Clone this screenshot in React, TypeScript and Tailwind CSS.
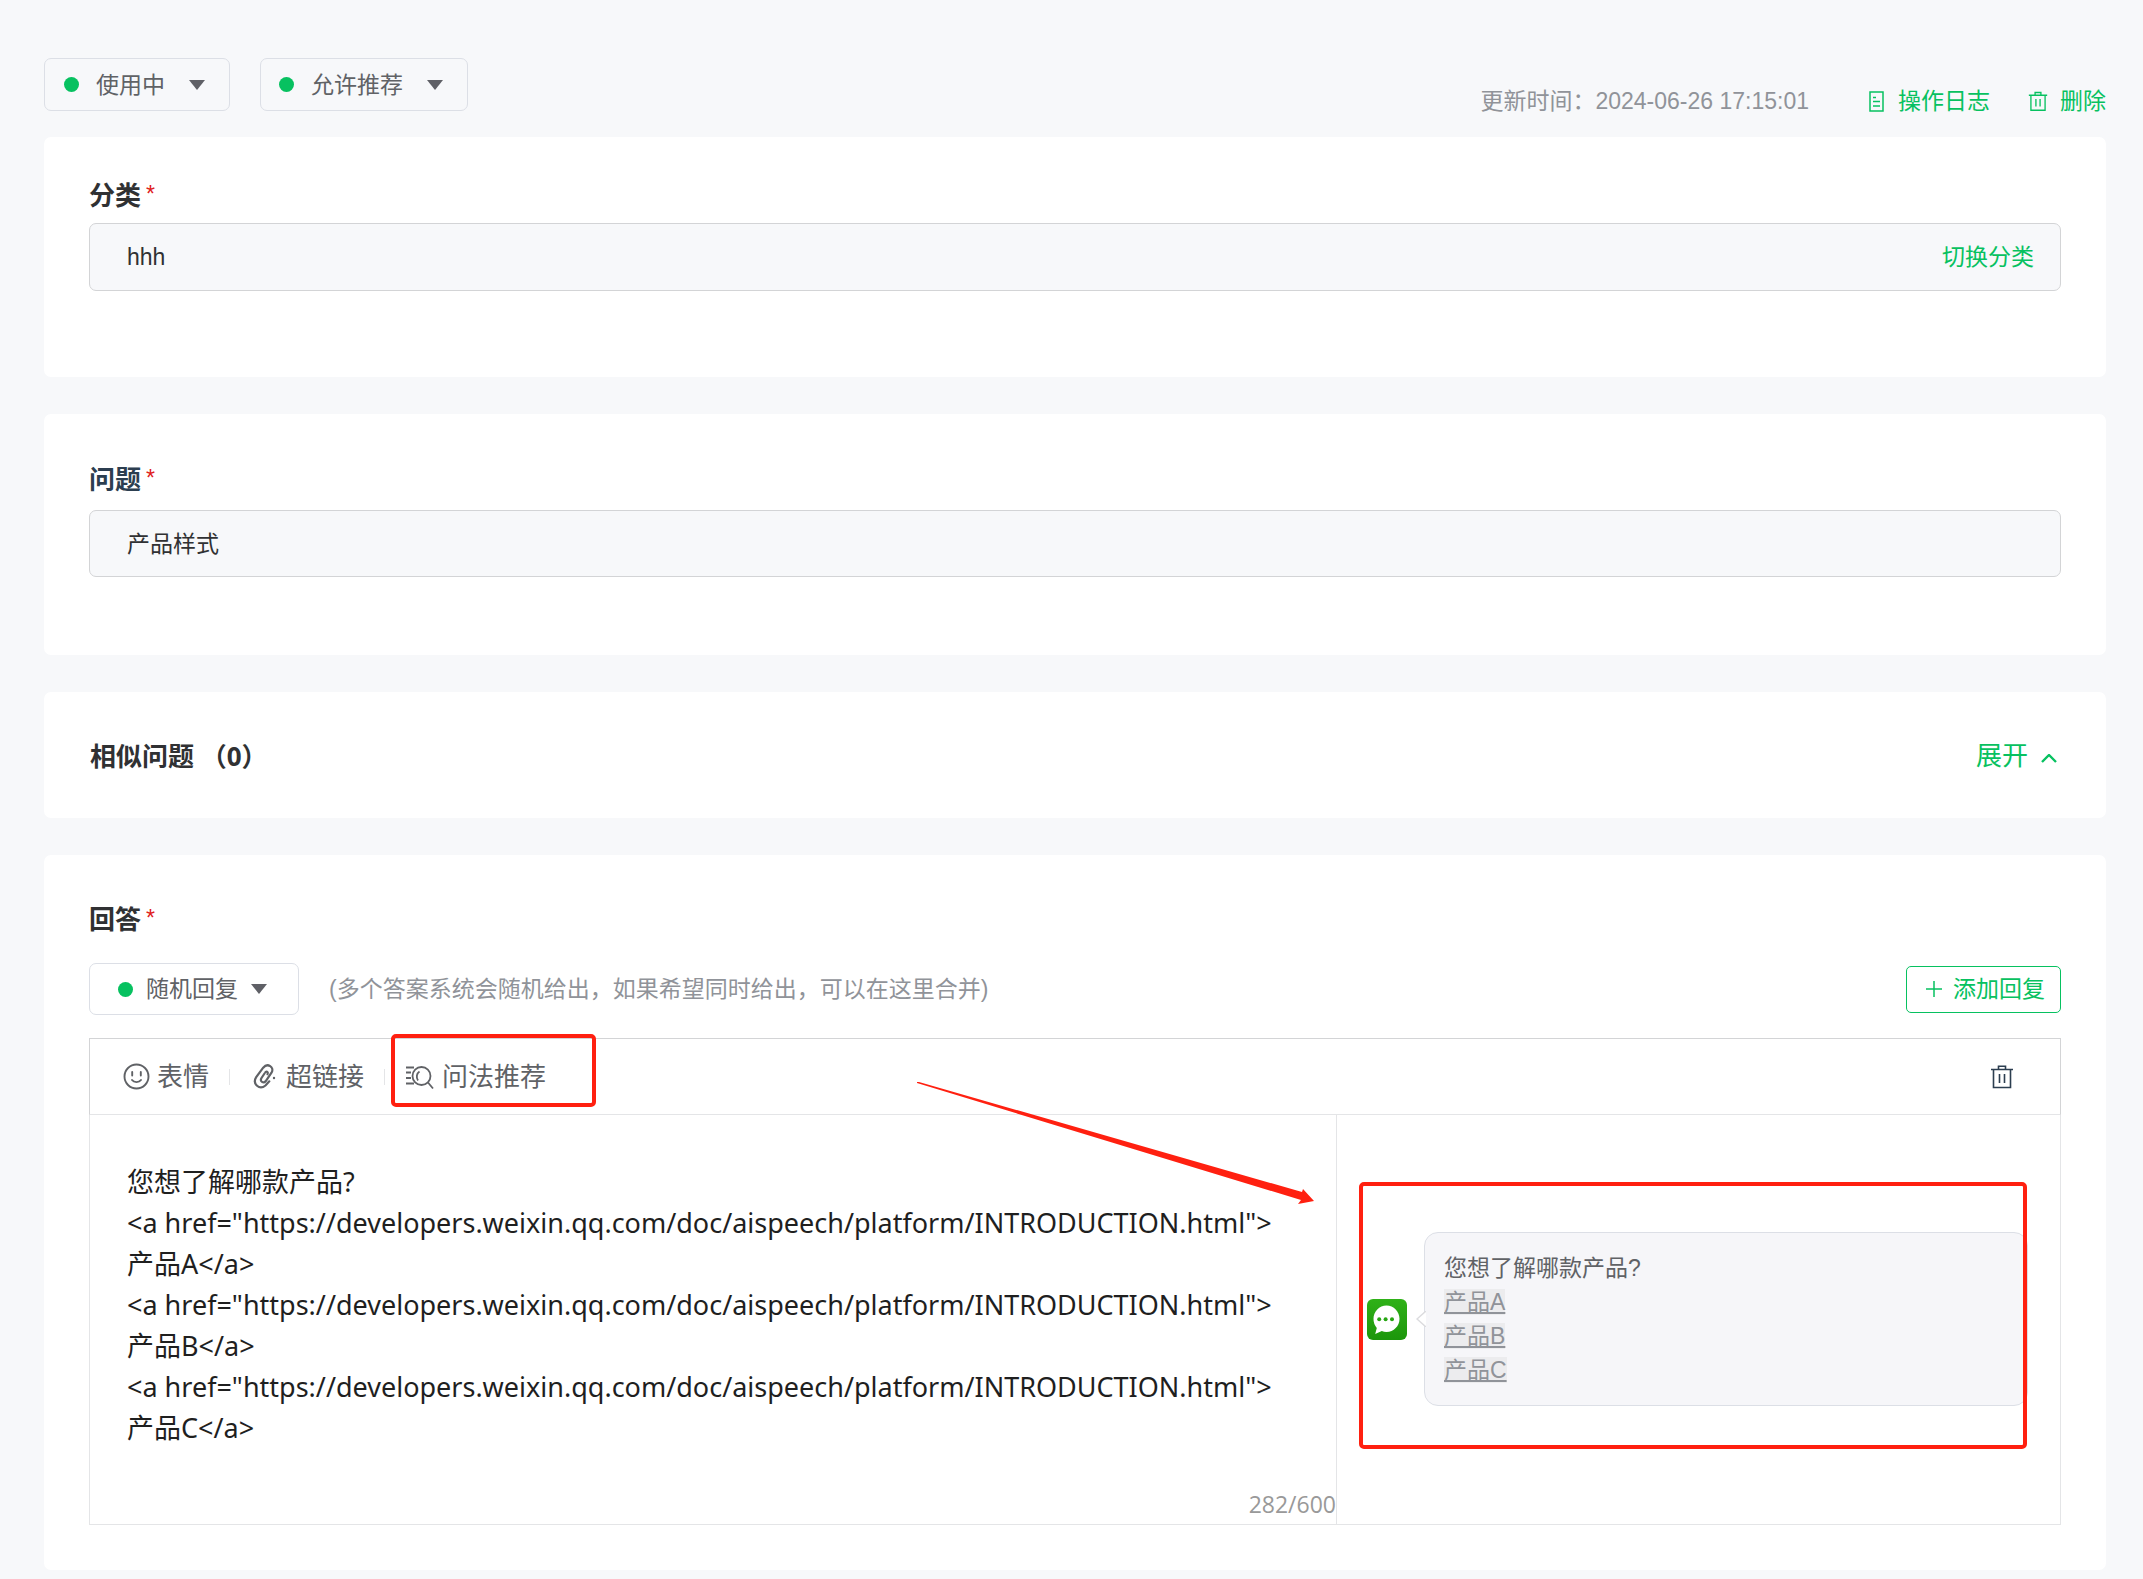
import React, { useState } from 'react';

const answerText = `您想了解哪款产品?
<a href="https://developers.weixin.qq.com/doc/aispeech/platform/INTRODUCTION.html">产品A</a>
<a href="https://developers.weixin.qq.com/doc/aispeech/platform/INTRODUCTION.html">产品B</a>
<a href="https://developers.weixin.qq.com/doc/aispeech/platform/INTRODUCTION.html">产品C</a>`;

const products = ['产品A', '产品B', '产品C'];

const Dot = () => <span className="h-[15px] w-[15px] shrink-0 rounded-full bg-[#07c160]" />;

const Caret = () => (
  <svg className="h-[10px] w-4 shrink-0" viewBox="0 0 16 10" fill="#5f6066">
    <path d="M0 0h16L8 10z" />
  </svg>
);

const TrashIcon = ({ className }: { className: string }) => (
  <svg className={className} viewBox="0 0 24 24" fill="none" stroke="currentColor" strokeWidth="1.6">
    <path d="M1 4.5h22M8.5 4.5V1.2h7v3.3M3.5 4.5v18h17v-18M9.5 9v9M14.5 9v9" />
  </svg>
);

const LogIcon = () => (
  <svg className="h-[21px] w-[19px]" viewBox="0 0 19 21" fill="none" stroke="currentColor" strokeWidth="1.5">
    <path d="M3 1h13v19H3zM6 6.5h3M6 10.5h7M6 15h7" />
  </svg>
);

const SmileIcon = () => (
  <svg className="h-[27px] w-[27px]" viewBox="0 0 27 27" fill="none" stroke="currentColor" strokeWidth="1.9" strokeLinecap="round">
    <circle cx="13.5" cy="13.5" r="12" />
    <path d="M9.2 9v3.5M17.8 9v3.5M9 17c2 2.8 7 2.8 9 0" />
  </svg>
);

const ClipIcon = () => (
  <svg className="h-[26px] w-[24px]" viewBox="0 0 24 26" fill="none" stroke="currentColor" strokeWidth="2.2" strokeLinecap="round">
    <path d="M11.5 9.5l-3 4.5c-2 3.5 2 6 4.3 3l5.7-8.3c3.3-5.7-4-10.200-8.300-5L3.200 13.200c-4.200 6.800 3.300 13.300 9.300 8.300l3.800-4.200" />
    <path d="M12.5 8.2c1.5-1.200 3 .2 2 2" />
    <circle cx="21" cy="14" r="1.2" fill="currentColor" stroke="none" />
  </svg>
);

const QuerySearchIcon = () => (
  <svg className="h-[26px] w-[29px]" viewBox="0 0 29 26" fill="none" stroke="currentColor" strokeWidth="1.8">
    <circle cx="16.5" cy="12" r="9" />
    <path d="M23 18.500l5 6M13 16.500c-2-3-1.500-7 1.500-9M1 3.500h8M1 8.500h5M1 14h5M1 19.500h8" />
  </svg>
);

const RobotAvatar = () => (
  <svg className="h-[41px] w-10 shrink-0" viewBox="0 0 40 41">
    <defs>
      <linearGradient id="avatar" x1="0" y1="0" x2="0" y2="1">
        <stop offset="0" stopColor="#2fb118" />
        <stop offset="1" stopColor="#1c960b" />
      </linearGradient>
    </defs>
    <rect width="40" height="41" rx="6" fill="url(#avatar)" />
    <path d="M19.5 6.500c7.200 0 13 6 13 13.300s-5.800 13.200-13 13.200c-1.700 0-3.300-.3-4.700-.9L8.200 35l1.600-6.100a13.400 13.400 0 0 1-3.300-9.100c0-7.300 5.800-13.300 13-13.300z" fill="#fff" />
    <g fill="#27a613">
      <circle cx="12.2" cy="20.3" r="2" />
      <circle cx="18.6" cy="20.3" r="2" />
      <circle cx="25" cy="20.3" r="2" />
    </g>
  </svg>
);

interface FieldLabelProps {
  htmlFor: string;
  color: string;
  children: React.ReactNode;
}

const FieldLabel = ({ htmlFor, color, children }: FieldLabelProps) => (
  <label htmlFor={htmlFor} className={`flex text-[26px] leading-9 font-bold ${color}`}>
    {children}
    <span className="ml-[5px] text-[23px] leading-8 font-normal text-[#e02020]">*</span>
  </label>
);

const Divider = () => <span className="h-4 w-px bg-[#e4e5e7]" />;

export default function App() {
  const [question, setQuestion] = useState('产品样式');
  const [answer, setAnswer] = useState(answerText);

  return (
    <div className="min-h-screen bg-[#f7f8fa] pt-[58px] pr-[37px] pb-[9px] pl-11 font-['Liberation_Sans','Noto_Sans_CJK_SC',sans-serif] text-[23px] leading-[34px] text-[#606266]">
      <header className="flex h-[79px] items-start justify-between">
        <div className="flex gap-[30px]">
          <button className="flex h-[53px] items-center rounded-[7px] border border-[#dcdfe6] pr-6 pl-[19px]">
            <Dot />
            <span className="mr-6 ml-[17px]">使用中</span>
            <Caret />
          </button>
          <button className="flex h-[53px] items-center rounded-[7px] border border-[#dcdfe6] pr-6 pl-[18px]">
            <Dot />
            <span className="mr-6 ml-[17px]">允许推荐</span>
            <Caret />
          </button>
        </div>
        <div className="flex items-center pt-[26px]">
          <span className="mr-[58px] text-[#909399]">更新时间：2024-06-26 17:15:01</span>
          <button className="mr-[38px] flex items-center gap-3 text-[#07c160]">
            <LogIcon />
            操作日志
          </button>
          <button className="flex items-center gap-3 text-[#07c160]">
            <TrashIcon className="h-[21px] w-5" />
            删除
          </button>
        </div>
      </header>

      <main className="flex flex-col gap-[37px]">
        <section className="rounded-[7px] bg-white px-[45px] pt-[41px] pb-[86px]">
          <FieldLabel htmlFor="category" color="text-[#303133]">分类</FieldLabel>
          <div className="mt-[9px] flex h-[68px] items-center rounded-[7px] border border-[#d3d4d6] bg-[#f7f8fa] pr-[26px] pl-[37px]">
            <input id="category" readOnly value="hhh" className="min-w-0 flex-1 bg-transparent text-[#303133] outline-none" />
            <button className="text-[#07c160]">切换分类</button>
          </div>
        </section>

        <section className="rounded-[7px] bg-white px-[45px] pt-12 pb-[78px]">
          <FieldLabel htmlFor="question" color="text-[#2c3e50]">问题</FieldLabel>
          <input
            id="question"
            value={question}
            onChange={e => setQuestion(e.target.value)}
            className="mt-3 block h-[67px] w-full rounded-[7px] border border-[#d3d4d6] bg-[#f7f8fa] px-[37px] pb-[3px] text-[#303133] outline-none"
          />
        </section>

        <section className="flex h-[126px] items-center justify-between rounded-[7px] bg-white pt-0.5 pr-[49px] pl-[46px] text-[26px]">
          <h2 className="font-['Open_Sans','Noto_Sans_CJK_SC',sans-serif] font-bold text-[#303133]">相似问题 （0）</h2>
          <button className="flex items-center gap-[13px] text-[#07c160]">
            展开
            <svg className="mt-1 h-[9px] w-4" viewBox="0 0 16 9" fill="none" stroke="currentColor" strokeWidth="2.4">
              <path d="M1 8l7-7 7 7" />
            </svg>
          </button>
        </section>

        <section className="rounded-[7px] bg-white px-[45px] pt-[47px] pb-[45px]">
          <FieldLabel htmlFor="answer" color="text-[#303133]">回答</FieldLabel>
          <div className="mt-[25px] flex items-center">
            <button className="flex h-[52px] items-center rounded-[7px] border border-[#dcdfe6] pr-[31px] pl-7">
              <Dot />
              <span className="mr-[13px] ml-[13px]">随机回复</span>
              <Caret />
            </button>
            <span className="ml-[30px] text-[#909399]">(多个答案系统会随机给出，如果希望同时给出，可以在这里合并)</span>
            <button className="ml-auto flex h-[47px] items-center gap-[11px] rounded-[5px] border border-[#07c160] pr-[15px] pl-[19px] text-[#07c160]">
              <svg className="h-4 w-4" viewBox="0 0 16 16" stroke="currentColor" strokeWidth="1.5">
                <path d="M8 0v16M0 8h16" />
              </svg>
              添加回复
            </button>
          </div>

          <div className="relative mt-[23px]">
            <div className="flex h-[77px] items-center justify-between border border-[#d3d4d6] border-b-[#e4e5e7] pr-[46px] pl-[33px] text-[26px]">
              <div className="flex items-center">
                <button className="mr-5 flex items-center gap-[7px]">
                  <SmileIcon />
                  表情
                </button>
                <Divider />
                <button className="mr-5 ml-[23px] flex items-center gap-[9px]">
                  <ClipIcon />
                  超链接
                </button>
                <Divider />
                <div className="relative ml-5">
                  <button className="flex items-center gap-2">
                    <QuerySearchIcon />
                    问法推荐
                  </button>
                  <span className="pointer-events-none absolute -top-[26px] -right-[50px] -bottom-[13px] -left-[14px] rounded-[5px] border-4 border-[#ff2010]" />
                </div>
              </div>
              <button aria-label="删除回复" className="text-[#2c3e50]">
                <TrashIcon className="h-6 w-6" />
              </button>
            </div>

            <div className="flex h-[410px] border border-t-0 border-[#e4e5e7]">
              <div className="flex w-[63.3%] flex-col border-r border-[#e4e5e7]">
                <textarea
                  id="answer"
                  value={answer}
                  onChange={e => setAnswer(e.target.value)}
                  className="min-h-0 w-full flex-1 resize-none overflow-hidden pt-[46px] pr-10 pl-[37px] font-['Noto_Sans','Noto_Sans_CJK_SC',sans-serif] text-[27px] leading-[41px] text-[#1f1f1f] outline-none"
                />
                <span className="pb-[3px] text-right font-['Open_Sans',sans-serif] text-[23px] text-[#999]">282/600</span>
              </div>
              <div className="flex flex-1 flex-col pt-[67px] pr-8 pl-[22px]">
                <div className="relative flex items-center pt-[50px] pb-[43px] pl-2">
                  <RobotAvatar />
                  <div className="relative ml-[17px] flex-1 rounded-[14px] border border-[#dcdfe6] bg-[#f6f6f9] px-[19px] py-[18px]">
                    <svg className="absolute top-1/2 -left-[9px] -mt-2 h-4 w-[10px]" viewBox="0 0 10 16">
                      <path d="M10 0L1 8l9 8" fill="#fff" stroke="#dcdcdf" strokeWidth="1.5" />
                    </svg>
                    <p>您想了解哪款产品?</p>
                    {products.map(name => (
                      <p key={name}>
                        <a href="https://developers.weixin.qq.com/doc/aispeech/platform/INTRODUCTION.html" className="bg-[#ececee] text-[#909399] underline">{name}</a>
                      </p>
                    ))}
                  </div>
                  <span className="pointer-events-none absolute inset-y-0 right-px left-0 rounded-[5px] border-4 border-[#ff2010]" />
                </div>
              </div>
            </div>

            {/* arrow from the toolbar to the preview */}
            <svg className="pointer-events-none absolute top-11 left-[42%] h-[123px] w-[398px]" viewBox="0 0 398 123" fill="#ff2010">
              <path d="M0 0h2L385 110l1-3 11 12-16 3 3-4L0 1z" />
            </svg>
          </div>
        </section>
      </main>
    </div>
  );
}
